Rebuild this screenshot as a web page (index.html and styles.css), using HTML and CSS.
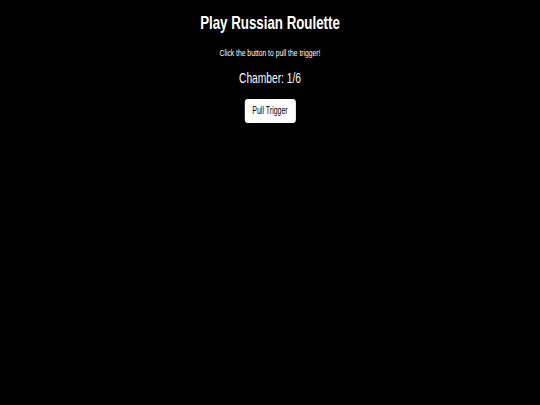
FILE: index.html
```html
<!DOCTYPE html>
<html lang="en">
<head>
    <meta charset="UTF-8">
    <meta name="viewport" content="width=device-width, initial-scale=1.0">
    <title>Russian Roulette</title>
    <link rel="stylesheet" href="styles.css">
</head>
<body>
    <div class="game">
        <h1 class="title">Play Russian Roulette</h1>
        <p class="hint">Click the button to pull the trigger!</p>
        <p class="chamber">Chamber: <span id="chamber">1</span>/6</p>
        <button id="trigger" class="trigger">Pull Trigger</button>
    </div>
</body>
</html>
```
FILE: styles.css
```css
html, body {
    margin: 0;
    background: #000;
    height: 100%;
}
body {
    font-family: "Liberation Sans", Arial, sans-serif;
    color: #fff;
    overflow: hidden;
}
.game {
    text-align: center;
    padding-top: 12.2px;
    transform: scaleX(0.7);
    transform-origin: center top;
}
.title {
    margin: 0;
    font-size: 19px;
    line-height: 22px;
    font-weight: bold;
}
.hint {
    margin: 12.6px 0 0;
    font-size: 9.7px;
    line-height: 12px;
}
.chamber {
    margin: 10.3px 0 0;
    font-size: 14.6px;
    line-height: 18px;
}
.trigger {
    display: inline-block;
    margin-top: 12.2px;
    width: 73px;
    height: 23.4px;
    padding: 0;
    border: none;
    border-radius: 4px;
    background: #fff;
    color: #000;
    font-family: inherit;
    font-size: 10px;
    line-height: 23px;
    cursor: pointer;
}
```
